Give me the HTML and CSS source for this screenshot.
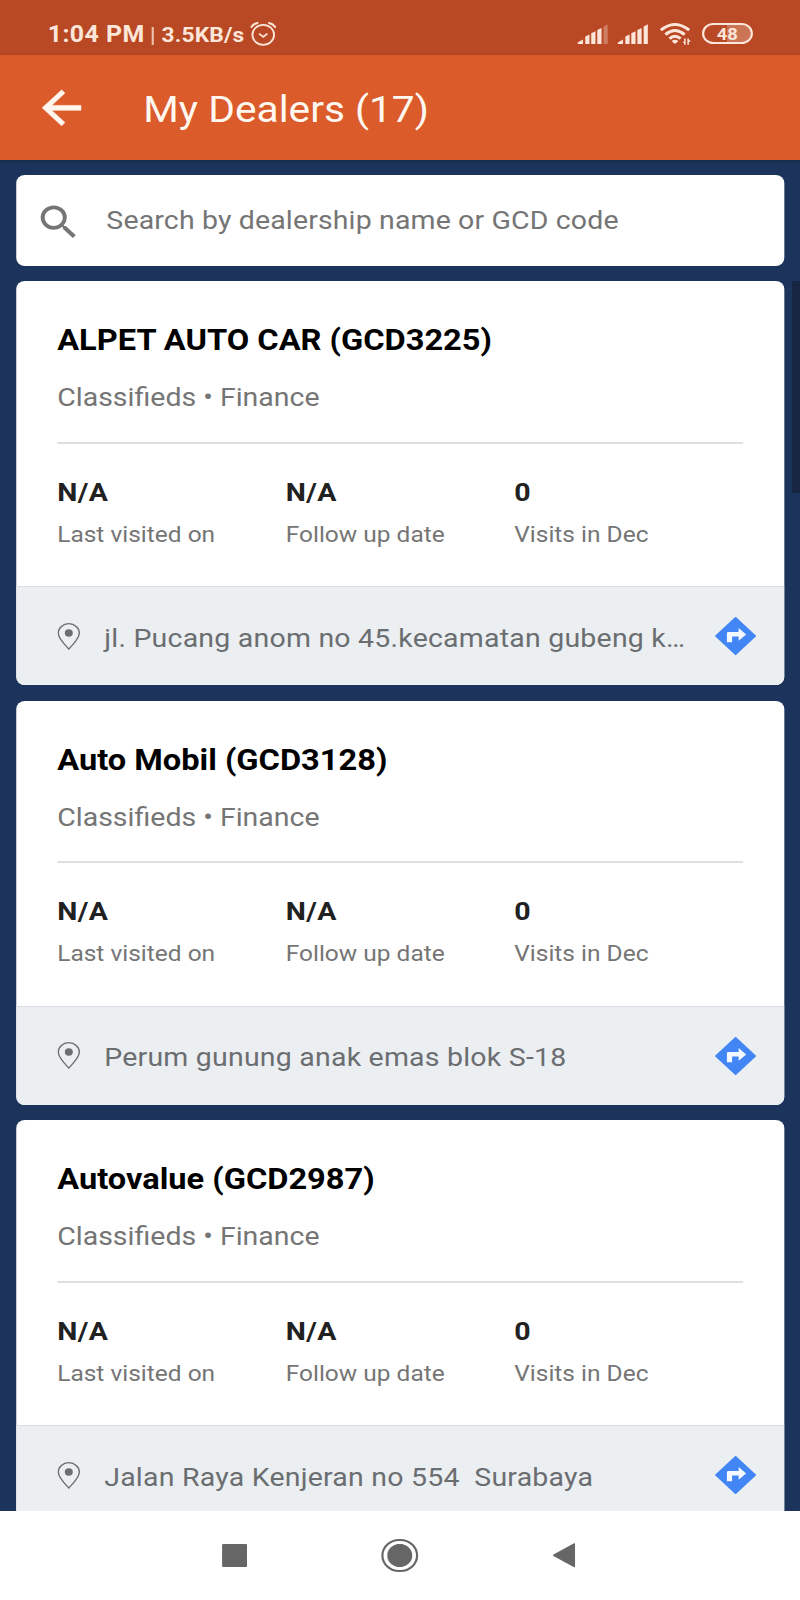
FILE: index.html
```html
<!DOCTYPE html>
<html lang="en">

<head>
  <meta charset="UTF-8">
  <meta name="viewport" content="width=device-width, initial-scale=1.0">
  <title>My Dealers</title>
  <link rel="stylesheet" href="styles.css">
</head>

<body>
  <!-- Shared icons -->
  <svg class="sprite">
    <symbol id="pin" viewBox="0 0 21 27">
      <path d="M10.5 26C8.6 23.6 .8 16 .8 10A9.7 9.3 0 0 1 20.2 10C20.2 16 12.4 23.6 10.5 26z" fill="none" stroke="#6b6e71" stroke-width="1.3" />
      <circle cx="10.5" cy="10" r="3.7" fill="#6b6e71" />
    </symbol>
    <symbol id="directions" viewBox="0 0 38 38">
      <path d="M18.4 .3Q19 -.2 19.6 .3L37.7 18.4Q38.2 19 37.7 19.6L19.6 37.7Q19 38.2 18.4 37.7L.3 19.6Q-.2 19 .3 18.4z" fill="#4285f4" />
      <path d="M11 25.3V16.2q0-1.3 1.3-1.3h9.5V11l7 6.4-7 6.4v-4.2h-6v5.7z" fill="#f4f8ff" />
    </symbol>
  </svg>

  <div class="screen">
    <div class="status">
      <span class="time">1:04 PM</span>
      <span class="bar"></span>
      <span class="speed">3.5KB/s</span>
      <svg class="alarm" viewBox="0 0 24 24" fill="none" stroke="#fce6d9">
        <circle cx="12" cy="12.8" r="10" stroke-width="1.7" />
        <path d="M8.2 11.6l3.8 3.2 3.8-3.2" stroke-width="1.7" />
        <path d="M1 5Q3 1.8 6.6 1M23 5Q21 1.8 17.4 1" stroke-width="2" stroke-linecap="round" />
      </svg>
      <div class="status-icons">
        <svg class="signal" viewBox="0 0 28 20" fill="#fce6d9">
          <path d="M0 20v-1.6L5 15.5V20zM7.1 20v-7.6l3.9-2V20zM12.6 20V9.2l3.9-2V20zM18.2 20V5.9l3.9-2V20z" />
          <path d="M24 20V2.6l4-2.4V20z" opacity=".35" />
        </svg>
        <svg class="signal" viewBox="0 0 28 20" fill="#fce6d9">
          <path d="M0 20v-1.6L5 15.5V20zM7.1 20v-7.6l3.9-2V20zM12.6 20V9.2l3.9-2V20zM18.2 20V5.9l3.9-2V20zM24 20V2.6l4-2.4V20z" />
        </svg>
        <svg class="wifi" viewBox="0 0 29 22" fill="none" stroke="#fce6d9" stroke-width="2.9">
          <path d="M1 7.2Q14 -4.2 27.2 7.2" />
          <path d="M5.2 11.6Q14 3.4 23 11.6" />
          <path d="M9 15.6Q14 10.8 19.2 15.6" />
          <path d="M11 18.2Q14 15.4 17.2 18.2L14 21z" fill="#fce6d9" stroke="none" />
          <path d="M23.2 15.5v6.3M26.2 15.5v6.3M21.6 19.4h2M25.8 18h2.4" stroke-width="1.4" />
        </svg>
        <div class="battery"><span>48</span></div>
      </div>
    </div>

    <header>
      <svg class="back" viewBox="0 0 24 24" fill="#fff6ee">
        <path d="M20 10.9H7.9l5.5-5.5L12 4l-8 8 8 8 1.4-1.4-5.5-5.5H20z" stroke="#fff6ee" stroke-width=".25" />
      </svg>
      <h1>My Dealers (17)</h1>
    </header>

    <main>
      <div class="search">
        <svg viewBox="0 0 24 24" fill="#757575">
          <path d="M15.5 14h-.79l-.28-.27A6.47 6.47 0 0 0 16 9.5 6.5 6.5 0 1 0 9.5 16c1.61 0 3.09-.59 4.23-1.57l.27.28v.79l5 4.99L20.49 19l-4.99-5zm-6 0C7.01 14 5 11.99 5 9.5S7.01 5 9.5 5 14 7.01 14 9.5 11.99 14 9.5 14z" />
        </svg>
        <span>Search by dealership name or GCD code</span>
      </div>

      <div class="card">
        <div class="card-body">
          <h2>ALPET AUTO CAR (GCD3225)</h2>
          <p class="services">Classifieds • Finance</p>
          <div class="stats">
            <div><b>N/A</b><span>Last visited on</span></div>
            <div><b>N/A</b><span>Follow up date</span></div>
            <div><b>0</b><span>Visits in Dec</span></div>
          </div>
        </div>
        <div class="address">
          <svg class="pin"><use href="#pin" /></svg>
          <span>jl. Pucang anom no 45.kecamatan gubeng k…</span>
          <svg class="directions"><use href="#directions" /></svg>
        </div>
      </div>

      <div class="card">
        <div class="card-body">
          <h2>Auto Mobil (GCD3128)</h2>
          <p class="services">Classifieds • Finance</p>
          <div class="stats">
            <div><b>N/A</b><span>Last visited on</span></div>
            <div><b>N/A</b><span>Follow up date</span></div>
            <div><b>0</b><span>Visits in Dec</span></div>
          </div>
        </div>
        <div class="address">
          <svg class="pin"><use href="#pin" /></svg>
          <span>Perum gunung anak emas blok S-18</span>
          <svg class="directions"><use href="#directions" /></svg>
        </div>
      </div>

      <div class="card">
        <div class="card-body">
          <h2>Autovalue (GCD2987)</h2>
          <p class="services">Classifieds • Finance</p>
          <div class="stats">
            <div><b>N/A</b><span>Last visited on</span></div>
            <div><b>N/A</b><span>Follow up date</span></div>
            <div><b>0</b><span>Visits in Dec</span></div>
          </div>
        </div>
        <div class="address">
          <svg class="pin"><use href="#pin" /></svg>
          <span>Jalan Raya Kenjeran no 554&nbsp; Surabaya</span>
          <svg class="directions"><use href="#directions" /></svg>
        </div>
      </div>

      <div class="scrollbar"></div>
    </main>

    <nav>
      <div class="recent"></div>
      <div class="home"></div>
      <svg class="prev" viewBox="0 0 21 25" fill="#666">
        <path d="M20 .3Q21 0 21 1V24Q21 25 20 24.7L.6 13.3Q-.2 12.5 .6 11.7z" />
      </svg>
    </nav>
  </div>
</body>

</html>
```
FILE: styles.css
```css
* {
  box-sizing: border-box;
}

body {
  margin: 0;
  font-family: Roboto, sans-serif;
  overflow: hidden;
}

h1,
h2,
p {
  margin: 0;
}

svg {
  display: block;
  flex-shrink: 0;
}

.sprite {
  display: none;
}

/* Laid out 739px wide, then stretched to fill the 800px window */
.screen {
  width: 739px;
  height: 1600px;
  display: flex;
  flex-direction: column;
  background-color: #1c345c;
  transform: scaleX(1.08333);
  transform-origin: 0 0;
  overflow: hidden;
}

/* Status bar */
.status {
  height: 55px;
  flex-shrink: 0;
  padding: 13px 44.3px 0 44px;
  display: flex;
  align-items: center;
  background-color: #b94824;
  color: #fce6d9;
  font-weight: 700;
  white-space: nowrap;
}

.time {
  font-size: 23px;
  letter-spacing: 0.4px;
  padding-top: 1px;
}

.bar {
  width: 2px;
  height: 18px;
  margin: 4px 7.5px 0 6px;
  background-color: #e8c0ac;
}

.speed {
  font-size: 21px;
  letter-spacing: 0.15px;
  padding-top: 2px;
}

.alarm {
  width: 24px;
  height: 24px;
  margin-left: 5px;
}

.status-icons {
  margin-left: auto;
  display: flex;
  align-items: center;
  padding-bottom: 1px;
}

.signal {
  width: 28.3px;
  height: 20px;
  margin-right: 8.7px;
}

.wifi {
  width: 29px;
  height: 22px;
  margin: 1px 10.5px 0 2px;
}

.battery {
  width: 46.6px;
  height: 21px;
  border: 2px solid #fce6d9;
  border-radius: 11px;
  background: linear-gradient(to right, transparent 50%, #cb7556 50%) padding-box;
  display: flex;
  align-items: center;
  justify-content: center;
  font-size: 17px;
}

/* App bar */
header {
  height: 105px;
  flex-shrink: 0;
  padding-left: 30.3px;
  display: flex;
  align-items: center;
  background-color: #db5b2b;
  box-shadow: 0 1px 3px rgba(0, 0, 0, 0.3);
}

.back {
  width: 53.7px;
  height: 53.7px;
}

h1 {
  margin-left: 48.3px;
  padding-top: 2px;
  font-size: 37.6px;
  font-weight: 400;
  color: #fff8f0;
}

/* Dealer list */
main {
  position: relative;
  flex: 1;
  min-height: 0;
  padding: 15px 15.4px 0 14.8px;
  overflow: hidden;
}

.search {
  height: 91px;
  margin-bottom: 15px;
  padding-left: 17.6px;
  display: flex;
  align-items: center;
  background-color: #fff;
  border-radius: 8px;
  font-size: 26.3px;
  letter-spacing: 0.13px;
  color: #757575;
}

.search svg {
  width: 44.5px;
  height: 44.5px;
  margin-top: 4px;
}

.search span {
  margin-left: 21.3px;
  padding-bottom: 1px;
}

.card {
  height: 404px;
  margin-bottom: 15.5px;
  border-radius: 8px;
  background-color: #fff;
  overflow: hidden;
}

.card-body {
  height: 305px;
  padding: 39.2px 38px 0;
}

h2 {
  font-size: 30.1px;
  line-height: 40px;
  font-weight: 700;
  color: #000;
}

.services {
  margin-top: 20px;
  font-size: 26.3px;
  line-height: 34px;
  color: #757575;
}

.stats {
  margin-top: 27.5px;
  padding-top: 32.3px;
  border-top: 2px solid #dedfe0;
  display: grid;
  grid-template-columns: repeat(3, 1fr);
}

.stats b {
  display: block;
  font-size: 26.3px;
  line-height: 32px;
  letter-spacing: 0.4px;
  color: #212121;
}

.stats span {
  display: block;
  margin-top: 12.8px;
  font-size: 22.6px;
  line-height: 28px;
  color: #757575;
}

.address {
  height: 99px;
  padding: 0 25.6px 0 38px;
  display: flex;
  align-items: center;
  background-color: #ebeff2;
  border-top: 1.5px solid #d8dee3;
  font-size: 26.3px;
  letter-spacing: 0.2px;
  white-space: nowrap;
  color: #6b6e71;
}

.address span {
  flex: 1;
  min-width: 0;
  padding: 3px 0 0 22.4px;
}

.pin {
  width: 21px;
  height: 27px;
}

.directions {
  width: 38px;
  height: 38px;
}

.scrollbar {
  position: absolute;
  top: 121px;
  right: 0;
  width: 8px;
  height: 212px;
  background-color: #182644;
}

/* Android navigation */
nav {
  height: 89px;
  flex-shrink: 0;
  padding-right: 2.4px;
  display: flex;
  align-items: center;
  justify-content: center;
  gap: 124.5px;
  background-color: #fff;
}

.recent {
  width: 22.2px;
  height: 22.4px;
  border-radius: 1px;
  background-color: #666;
}

.home {
  width: 33.4px;
  height: 33.4px;
  border: 2.4px solid #666;
  border-radius: 50%;
  background: radial-gradient(circle, #666 11.2px, #fff 11.9px);
}

.prev {
  width: 21.2px;
  height: 24.5px;
}
```
